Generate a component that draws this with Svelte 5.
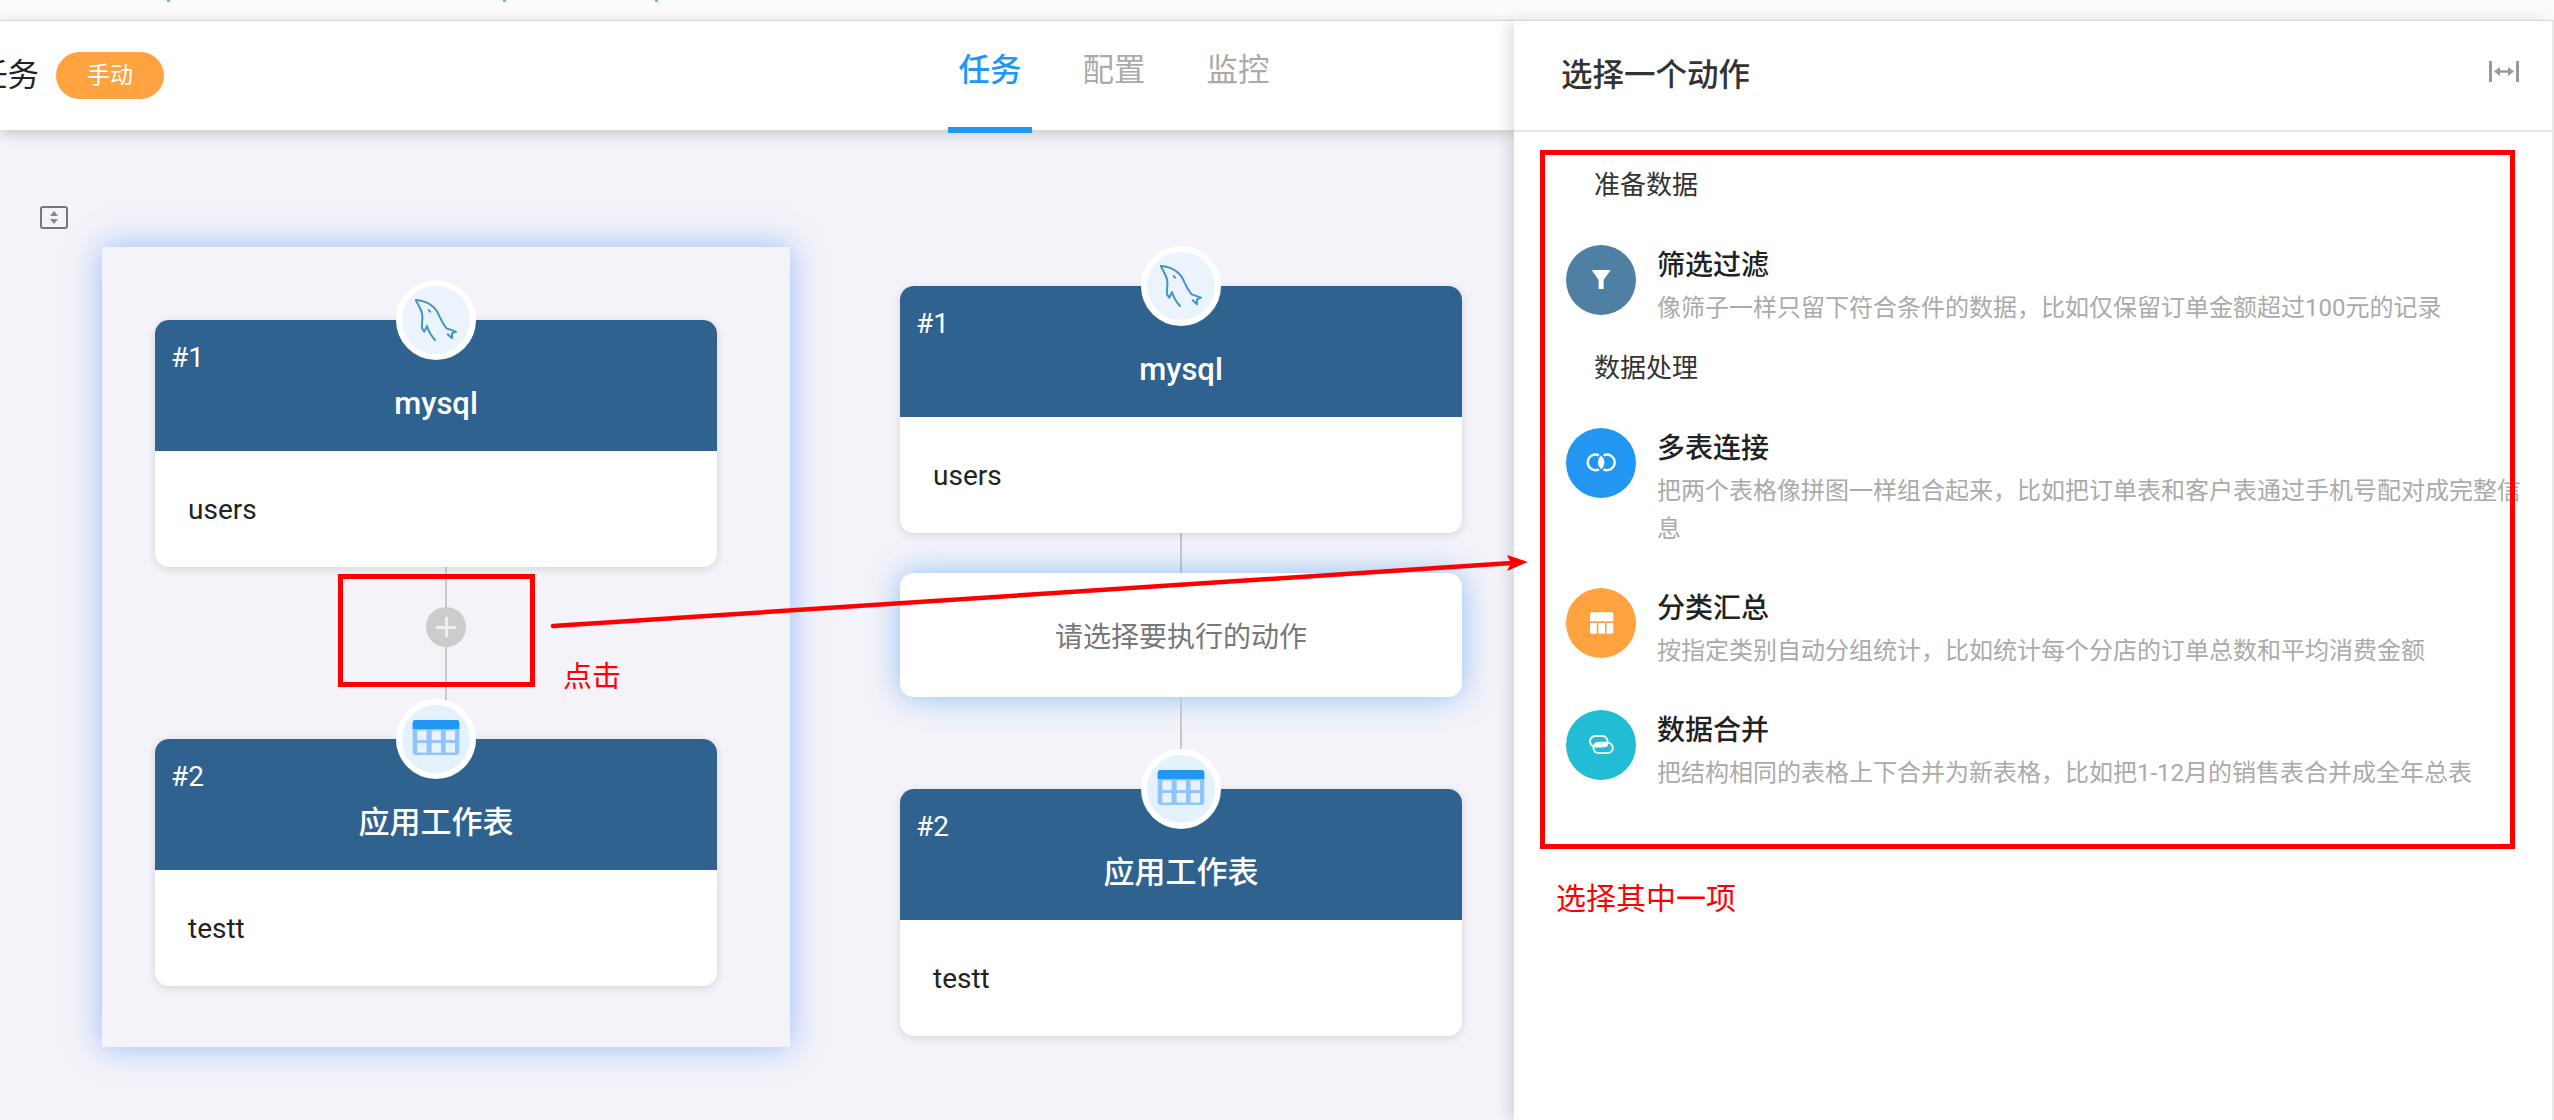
<script>
	const tabs = [
		{ label: '任务', active: true },
		{ label: '配置', active: false },
		{ label: '监控', active: false }
	];

	const sections = [
		{
			title: '准备数据',
			items: [
				{ icon: 'filter', color: '#4f7fa3', name: '筛选过滤', desc: '像筛子一样只留下符合条件的数据，比如仅保留订单金额超过100元的记录' }
			]
		},
		{
			title: '数据处理',
			items: [
				{ icon: 'join', color: '#2196f3', name: '多表连接', desc: '把两个表格像拼图一样组合起来，比如把订单表和客户表通过手机号配对成完整信息' },
				{ icon: 'group', color: '#ffa340', name: '分类汇总', desc: '按指定类别自动分组统计，比如统计每个分店的订单总数和平均消费金额' },
				{ icon: 'union', color: '#22bcd4', name: '数据合并', desc: '把结构相同的表格上下合并为新表格，比如把1-12月的销售表合并成全年总表' }
			]
		}
	];
</script>

{#snippet dolphin()}
	<svg class="node-icon" viewBox="18 18 204 204">
		<g fill="none" stroke="#4393c8" stroke-width="6" stroke-linecap="round" stroke-linejoin="round">
			<path d="M60 60 L75 62 C95 66 110 75 122 92 C132 110 138 130 152 145 L180 155 L168 160 L168 175 L155 163" />
			<path d="M60 60 C62 70 75 85 78 100 C82 115 76 130 78 145 L85 155 L93 138 C98 155 108 170 117 180" />
			<path d="M98 90 L102 95" />
		</g>
	</svg>
{/snippet}

{#snippet sheet()}
	<svg class="node-icon" viewBox="6 6 68 68">
		<rect x="16.7" y="21" width="46.6" height="35" rx="3" fill="#90c4fa" />
		<path d="M16.7 30 V24 a3 3 0 0 1 3 -3 H60.3 a3 3 0 0 1 3 3 V30 Z" fill="#2196f3" />
		{#each [21.3, 35.7, 49.7] as x}
			{#each [31.5, 44] as y}
				<rect {x} {y} width="9.3" height="9.6" fill="#e6f3fd" />
			{/each}
		{/each}
	</svg>
{/snippet}

{#snippet node(num, title, body, tint, icon)}
	<div class="node">
		<div class="node-badge" style="background: {tint}">{@render icon()}</div>
		<div class="node-head">
			<div class="node-num">#{num}</div>
			<div class="node-title">{title}</div>
		</div>
		<div class="node-body">{body}</div>
	</div>
{/snippet}

<div class="page">
	<div class="topstrip">
		<i style="left: 167px"></i>
		<i style="left: 503px"></i>
		<i style="left: 655px"></i>
	</div>

	<div class="main">
		<div class="work">
			<header class="bar">
				<span class="task-name">任务</span>
				<span class="mode">手动</span>
				<nav class="tabs">
					{#each tabs as t}
						<span class="tab" class:active={t.active}>{t.label}</span>
					{/each}
				</nav>
			</header>

			<div class="canvas">
				<div class="fit">
					<svg width="28" height="23" viewBox="0 0 28 23">
						<rect x="1" y="1" width="26" height="21" rx="2" fill="none" stroke="#777" stroke-width="2" />
						<path d="M14 5 L18 10 H10 Z M14 18 L18 13 H10 Z" fill="#888" />
					</svg>
				</div>

				<div class="focus">
					{@render node(1, 'mysql', 'users', '#ebf4fc', dolphin)}
					<div class="link">
						<span class="line short"></span>
						<span class="add"><b></b></span>
						<span class="line grow"></span>
					</div>
					{@render node(2, '应用工作表', 'testt', '#e3f2fd', sheet)}
				</div>

				<div class="flow">
					{@render node(1, 'mysql', 'users', '#ebf4fc', dolphin)}
					<span class="line short"></span>
					<div class="pending">请选择要执行的动作</div>
					<span class="line tall"></span>
					{@render node(2, '应用工作表', 'testt', '#e3f2fd', sheet)}
				</div>
			</div>
		</div>

		<aside class="panel">
			<div class="panel-head">
				<h2>选择一个动作</h2>
				<svg width="30" height="21" viewBox="0 0 30 21">
					<path d="M1.5 0 V21 M28.5 0 V21" stroke="#999" stroke-width="3" />
					<path d="M5 10.5 L11 6 V9.2 H19 V6 L25 10.5 L19 15 V11.8 H11 V15 Z" fill="#999" />
				</svg>
			</div>
			<div class="panel-body">
				{#each sections as s}
					<div class="section">{s.title}</div>
					{#each s.items as item}
						<div class="item">
							<span class="dot" style="background: {item.color}">
								<svg width="70" height="70" viewBox="0 0 70 70">
									{#if item.icon === 'filter'}
										<path d="M25.7 25 H44.7 L37.6 35 V44 H32.6 V35 Z" fill="#fff" />
									{:else if item.icon === 'join'}
										<path d="M33 27.3 A7.8 7.8 0 1 0 33 41.3" fill="none" stroke="#fff" stroke-width="2.4" />
										<path d="M37.4 27.3 A7.8 7.8 0 1 1 37.4 41.3" fill="none" stroke="#fff" stroke-width="2.4" />
										<path d="M35.2 27.4 A9 9 0 0 1 35.2 41.2 A9 9 0 0 1 35.2 27.4 Z" fill="#fff" />
									{:else if item.icon === 'group'}
										<path d="M24 33.3 V26.3 a2 2 0 0 1 2 -2 H45.3 a2 2 0 0 1 2 2 V33.3 Z" fill="#fff" />
										<path d="M24 35 H30.7 V45.7 H26 a2 2 0 0 1 -2 -2 Z" fill="#fff" />
										<rect x="32.4" y="35" width="6.6" height="10.7" fill="#fff" />
										<path d="M40.6 35 H47.3 V43.7 a2 2 0 0 1 -2 2 H40.6 Z" fill="#fff" />
									{:else}
										<rect x="24" y="26" width="17.6" height="10.6" rx="5.3" fill="none" stroke="#fff" stroke-width="1.8" />
										<rect x="27.4" y="32.6" width="19.4" height="10.6" rx="5.3" fill="none" stroke="#fff" stroke-width="1.8" />
										<path d="M29 32.6 H41.6 V36.6 H29 Z" fill="#fff" />
									{/if}
								</svg>
							</span>
							<div class="item-text">
								<div class="item-name">{item.name}</div>
								<div class="item-desc">{item.desc}</div>
							</div>
						</div>
					{/each}
				{/each}
			</div>
		</aside>
	</div>

	<!-- red annotations drawn on top of the screenshot -->
	<div class="mark mark-add"></div>
	<div class="mark mark-list"></div>
	<span class="note note-click">点击</span>
	<span class="note note-pick">选择其中一项</span>
	<svg class="arrow" width="2554" height="1120" viewBox="0 0 2554 1120">
		<path d="M553 626 L1512 563" stroke="#f00" stroke-width="4.5" stroke-linecap="round" />
		<path d="M1528 562 L1507 555 L1511 563 L1507 571 Z" fill="#f00" />
	</svg>
</div>

<style>
	:global(body) {
		margin: 0;
	}

	.page {
		position: relative;
		width: 2554px;
		height: 1120px;
		overflow: hidden;
		display: flex;
		flex-direction: column;
		font-family: Roboto, 'Noto Sans CJK SC', sans-serif;
		color: #222;
	}

	.topstrip {
		position: relative;
		flex: none;
		height: 20px;
		background: #fcfcfc;
		border-bottom: 1px solid #e2e2e2;
	}
	.topstrip i {
		position: absolute;
		top: 0;
		width: 3px;
		height: 2px;
		background: #6bb8f5;
	}

	.main {
		flex: 1;
		display: flex;
		min-height: 0;
	}

	.work {
		width: 1514px;
		flex: none;
		display: flex;
		flex-direction: column;
	}

	.bar {
		position: relative;
		z-index: 2;
		flex: none;
		height: 109px;
		display: flex;
		align-items: center;
		background: #fff;
		box-shadow: 0 3px 14px rgba(0, 0, 0, 0.2);
	}
	.task-name {
		margin-left: -24px;
		font-size: 31.5px;
		line-height: 42px;
	}
	.mode {
		margin-left: 17px;
		width: 108px;
		height: 47px;
		border-radius: 24px;
		background: #ffa340;
		color: #fff;
		font-size: 23px;
		line-height: 47px;
		text-align: center;
	}
	.tabs {
		margin-left: 784px;
		align-self: flex-start;
		display: flex;
		gap: 40px;
	}
	.tab {
		box-sizing: border-box;
		width: 84px;
		height: 112px;
		padding-top: 29px;
		font-size: 31.5px;
		line-height: 42px;
		text-align: center;
		color: #aaa;
	}
	.tab.active {
		color: #2196f3;
		font-weight: 500;
		border-bottom: 6px solid #2196f3;
	}

	.canvas {
		flex: 1;
		display: flex;
		align-items: flex-start;
		padding-left: 40px;
		background: #f3f3f9;
	}
	.fit {
		margin-top: 76px;
		margin-right: 34px;
		line-height: 0;
	}
	.focus {
		flex: none;
		box-sizing: border-box;
		width: 688px;
		margin-top: 117px;
		padding: 73px 53px 61px;
		box-shadow: 0 0 30px rgba(90, 150, 255, 0.6);
		background: #f3f3f9;
	}
	.flow {
		flex: none;
		width: 562px;
		margin-top: 156px;
		margin-left: 110px;
		display: flex;
		flex-direction: column;
		align-items: center;
	}

	.node {
		position: relative;
		width: 562px;
		height: 247px;
		display: flex;
		flex-direction: column;
		border-radius: 14px;
		background: #fff;
		box-shadow: 0 2px 10px rgba(0, 0, 0, 0.13);
	}
	.node-badge {
		position: absolute;
		left: 50%;
		top: -40px;
		box-sizing: border-box;
		width: 80px;
		height: 80px;
		margin-left: -40px;
		border: 6px solid #fff;
		border-radius: 50%;
	}
	.node-icon {
		display: block;
		width: 68px;
		height: 68px;
	}
	.node-head {
		flex: none;
		box-sizing: border-box;
		height: 131px;
		padding: 17px 16px 0;
		border-radius: 14px 14px 0 0;
		background: #2f628f;
		color: #fff;
	}
	.node-num {
		font-size: 28px;
		line-height: 42px;
	}
	.node-title {
		margin-top: 4px;
		font-size: 31px;
		font-weight: 500;
		line-height: 42px;
		text-align: center;
	}
	.node-body {
		flex: 1;
		display: flex;
		align-items: center;
		padding-left: 33px;
		font-size: 28px;
	}

	.link {
		display: flex;
		flex-direction: column;
		align-items: center;
		height: 172px;
	}
	.line {
		flex: none;
		width: 2px;
		background: #c8c8c8;
	}
	.line.short {
		height: 40px;
	}
	.line.grow {
		height: 92px;
	}
	.line.tall {
		height: 92px;
	}
	.add {
		position: relative;
		flex: none;
		width: 40px;
		height: 40px;
		border-radius: 50%;
		background: #ccc;
		outline: none;
	}
	.add b {
		position: absolute;
		left: 10px;
		top: 18.5px;
		width: 20px;
		height: 3px;
		background: #eee;
	}
	.add b::after {
		content: '';
		position: absolute;
		left: 8.5px;
		top: -8.5px;
		width: 3px;
		height: 20px;
		background: #eee;
	}

	.pending {
		box-sizing: border-box;
		width: 562px;
		height: 124px;
		padding-bottom: 1px;
		display: flex;
		align-items: center;
		justify-content: center;
		border-radius: 14px;
		background: #fff;
		box-shadow: 0 0 30px rgba(60, 150, 245, 0.55);
		font-size: 28px;
		color: #777;
	}

	.panel {
		position: relative;
		z-index: 3;
		flex: 1;
		box-sizing: border-box;
		background: #fff;
		border-right: 2px solid #e8e8e8;
		box-shadow: -5px 0 14px rgba(0, 0, 0, 0.13);
	}
	.panel-head {
		box-sizing: border-box;
		height: 111px;
		display: flex;
		align-items: center;
		justify-content: space-between;
		padding: 0 33px 8px 47px;
		border-bottom: 2px solid #e6e6e8;
	}
	.panel-head h2 {
		margin: 8px 0 0;
		font-size: 31.5px;
		font-weight: 500;
		line-height: 42px;
		color: #333;
	}
	.panel-body {
		padding: 32px 20px 0 52px;
	}
	.section {
		margin-left: 28px;
		margin-bottom: 19px;
		font-size: 26px;
		line-height: 42px;
		color: #333;
	}
	.item {
		display: flex;
		gap: 21px;
		padding: 20px 0;
	}
	.dot {
		flex: none;
		width: 70px;
		height: 70px;
		border-radius: 50%;
		line-height: 0;
	}
	.item-text {
		flex: 1;
		min-width: 0;
	}
	.item-name {
		font-size: 28px;
		font-weight: 500;
		line-height: 42px;
	}
	.item-desc {
		margin-top: 2px;
		font-size: 24px;
		line-height: 38px;
		color: #aaa;
	}

	.mark {
		position: absolute;
		z-index: 5;
		box-sizing: border-box;
		border: 5px solid #f00;
	}
	.mark-add {
		left: 338px;
		top: 574px;
		width: 197px;
		height: 113px;
	}
	.mark-list {
		left: 1540px;
		top: 150px;
		width: 975px;
		height: 699px;
	}
	.note {
		position: absolute;
		z-index: 5;
		color: #f00;
		line-height: 40px;
	}
	.note-click {
		left: 563px;
		top: 657px;
		font-size: 29px;
	}
	.note-pick {
		left: 1556px;
		top: 879px;
		font-size: 30px;
	}
	.arrow {
		position: absolute;
		z-index: 5;
		left: 0;
		top: 0;
		pointer-events: none;
	}
</style>
